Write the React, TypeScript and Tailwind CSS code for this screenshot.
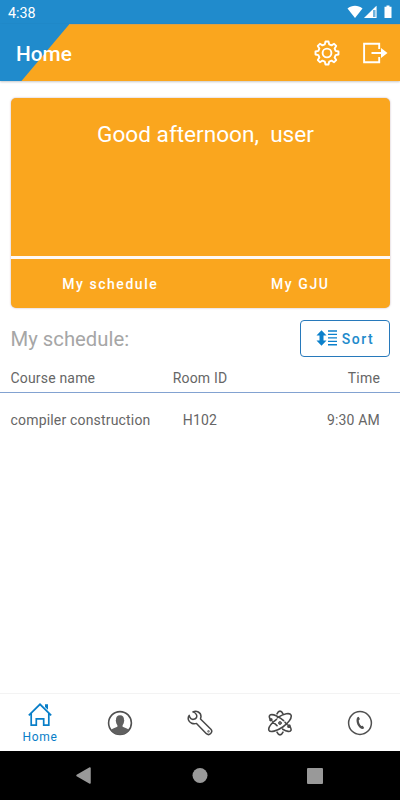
import React from "react";

function StatusBar() {
  return (
    <div className="flex h-6 items-center justify-between bg-[#208bcc] pl-2 pr-[7px] text-white">
      <span className="pt-[2px] text-[14.3px] leading-5">4:38</span>
      <svg width="46" height="14" viewBox="0 0 46 14" fill="white">
        <path d="M0.5 3.4C4.8 0 11.2 0 15.5 3.4L8 13Z" />
        <path d="M29.5 0.8V13H17Z" fillOpacity=".35" />
        <path d="M29.5 0.8V13H17ZM28.5 5H26v7h2.5Z" fillRule="evenodd" />
        <path d="M39.5 0.5h3v1.3h2V13h-7V1.8h2Z" />
      </svg>
    </div>
  );
}

function Header() {
  return (
    <header className="relative h-[57px] bg-[#faa61e] shadow-[0_1px_2px_rgba(0,0,0,0.22)]">
      <svg className="absolute inset-0" width="400" height="57">
        <path d="M0 0H69.5L21.5 57H0Z" fill="#208bcc" />
        <path d="M69 0.2H400" stroke="#c79a65" strokeWidth="0.8" />
      </svg>
      <div className="relative flex h-full items-center pl-4 pr-3 text-white">
        <h1 className="flex-1 pt-[3px] text-[20.8px] font-medium leading-6">Home</h1>
        <svg width="26" height="26" viewBox="0 0 26 26" fill="none" stroke="white" strokeWidth="1.9" strokeLinejoin="round" className="mr-[22px]">
          <path d="M10.8 4.4L11.5 1.5H14.5L15.2 4.4L17.6 5.4L20.1 3.8L22.2 5.9L20.6 8.4L21.6 10.8L24.5 11.5V14.5L21.6 15.2L20.6 17.6L22.2 20.1L20.1 22.2L17.6 20.6L15.2 21.6L14.5 24.5H11.5L10.8 21.6L8.4 20.6L5.9 22.2L3.8 20.1L5.4 17.6L4.4 15.2L1.5 14.5V11.5L4.4 10.8L5.4 8.4L3.8 5.9L5.9 3.8L8.4 5.4Z" />
          <circle cx="13" cy="13" r="4.4" />
        </svg>
        <svg width="26" height="22" viewBox="0 0 26 22" fill="none" stroke="white" strokeWidth="1.9">
          <path d="M17.2 7V1.8H2.1V20.2H17.2V15M9.5 11H20" />
          <path d="M19 6L25.5 11L19 16Z" fill="white" stroke="none" />
        </svg>
      </div>
    </header>
  );
}

function WelcomeCard() {
  return (
    <section className="ml-[10.5px] mr-[10.5px] mt-[17px] flex h-[210px] flex-col overflow-hidden rounded-[5px] bg-[#faa61e] text-white shadow-[0_0_2px_rgba(160,130,150,0.7)]">
      <div className="h-[158px] pl-[11px] pt-[22px] text-center text-[22.6px] leading-[30px]">
        <span className="whitespace-pre">Good afternoon,  user</span>
      </div>
      <div className="h-[3px] bg-[#fffaf5]" />
      <div className="grid flex-1 grid-cols-2 items-center text-center text-[14px] font-medium leading-5 tracking-[1.55px]">
        <span className="pl-[10px]">My schedule</span>
        <span className="pl-[11px]">My GJU</span>
      </div>
    </section>
  );
}

function SortIcon() {
  return (
    <svg width="22" height="16" viewBox="0 0 22 16" fill="#0b80cb">
      <path d="M5.5 0.3L10.5 5.5H7.5V10.5H10.5L5.5 15.7L0.5 10.5H3.5V5.5H0.5Z" />
      <path d="M12 0.3h9v1.4h-9zM12 3.7h9v1.4h-9zM12 7.2h9v1.4h-9zM12 10.7h9v1.4h-9zM12 14.1h9v1.4h-9z" />
    </svg>
  );
}

function Schedule() {
  return (
    <section>
      <div className="mt-[11px] flex h-[38px] items-center justify-between px-[10.5px]">
        <h2 className="pt-px text-[20.3px] leading-7 text-[#a6a6a6]">My schedule:</h2>
        <button className="flex h-[37px] w-[90px] items-center justify-center gap-1 rounded-[4px] border border-[#2779bb] pl-px text-[14px] font-medium tracking-[1.5px] text-[#218acb]">
          <SortIcon />
          <span className="pt-[2px]">Sort</span>
        </button>
      </div>
      <div className="grid h-[36px] grid-cols-[139.5px_100px_1fr] items-center border-b-[1.5px] border-[#82a2d1] pl-[10.5px] pr-[20px] pt-[7px] text-[14px] leading-5 tracking-[0.18px] text-[#666]">
        <span>Course name</span>
        <span className="text-center">Room ID</span>
        <span className="text-right">Time</span>
      </div>
      <div className="grid h-[54px] grid-cols-[139.5px_100px_1fr] items-center pl-[10.5px] pr-[20px] text-[14px] leading-5 tracking-[0.18px] text-[#666]">
        <span className="whitespace-nowrap">compiler construction</span>
        <span className="text-center">H102</span>
        <span className="text-right">9:30 AM</span>
      </div>
    </section>
  );
}

function HomeIcon() {
  return (
    <svg width="24" height="24" viewBox="0 0 24 24" fill="none" stroke="#087ec8" strokeWidth="1.7">
      <path d="M0.8 12.3L12 1.3L23.2 12.3M3.2 10.6V22.2H8.3V15.9H15.7V22.2H20.8V10.6" />
      <path d="M17 1.3H20V6.8L17 4.1Z" fill="#087ec8" stroke="none" />
    </svg>
  );
}

function PersonIcon() {
  return (
    <svg width="26" height="26" viewBox="0 0 26 26">
      <circle cx="13" cy="13" r="11.4" fill="none" stroke="#505050" strokeWidth="1.6" />
      <path d="M4.2 20.2C5 18.4 8.1 18.2 10.4 16.8V15.2C9.5 14.1 9.1 12.8 9 11.5C8.5 10.8 8.7 10.2 9 9.9C8.8 6.8 10.3 5.2 13 5.2C15.7 5.2 17.2 6.8 17 9.9C17.3 10.2 17.5 10.8 17 11.5C16.9 12.8 16.5 14.1 15.6 15.2V16.8C17.9 18.2 21 18.4 21.8 20.2C19.8 23.1 16.6 24.7 13 24.7C9.4 24.7 6.2 23.1 4.2 20.2Z" fill="#606060" />
    </svg>
  );
}

function WrenchIcon() {
  return (
    <svg width="26" height="26" viewBox="0 0 26 26" fill="none" stroke="#484848" strokeWidth="1.5" strokeLinecap="round" strokeLinejoin="round">
      <path d="M2.2 5.4C2.9 8.2 4.6 9.7 6.8 9.3C9.2 8.9 10.2 7 9.6 5.1C9.1 3.4 7.7 2.4 5.9 1.9C9.6 0.1 13.9 2.5 14 6.5L13.5 9L23.9 19.3C26.4 22.2 22.4 26.2 19.4 23.7L9.5 13.4C6.1 14.4 2.6 13 1.5 9.9C0.9 8.2 1.2 6.7 2.2 5.4Z" />
      <circle cx="21.5" cy="21.4" r=".4" />
    </svg>
  );
}

function AtomIcon() {
  return (
    <svg width="26" height="26" viewBox="0 0 26 26" fill="none" stroke="#484848" strokeWidth="1.6" strokeLinecap="round">
      <path d="M2.7 8.2C1.2 4.6 4.4 3.6 9.2 5.8C11.7 7 14.4 8.7 16.6 10.6M10.5 7.7C17 3.5 22.8 2.4 24 5C25.2 7.9 21.4 13.2 15.8 17C9.8 21.1 3.2 22.8 2 20.4C.9 18 4.2 13.4 9.5 9.3M5.9 11.5C7.1 13.1 8.4 14.4 10 15.7M15.7 19.2C19.8 21.5 23.3 22.3 24 20.3C24.3 19.4 23.9 18.2 23.3 17" />
      <path d="M10 3.9C10.9 2 11.9 1.1 13 1.1C14.1 1.1 15.1 2 16 3.9M10 22.1C10.9 24 11.9 24.9 13 24.9C14.1 24.9 15.1 24 16 22.1M20.1 14.5L18 12.2" />
      <circle cx="13" cy="13" r="1.5" fill="#606060" stroke="#606060" strokeWidth="1" />
      <circle cx="3.9" cy="9.8" r="1" fill="#606060" />
      <circle cx="22" cy="16.2" r="1.1" fill="#606060" />
    </svg>
  );
}

function PhoneIcon() {
  return (
    <svg width="26" height="26" viewBox="0 0 26 26">
      <circle cx="13" cy="13" r="11.4" fill="none" stroke="#505050" strokeWidth="1.5" />
      <path d="M10.1 7.4L11.7 6.8L13 9.3L11.8 10.1C11.7 12.4 12.6 14.6 14.3 16.1L15.8 15.7L17.2 18.1L16 19C11.2 18.6 8.2 11.4 10.1 7.4Z" fill="#505050" />
    </svg>
  );
}

function TabBar() {
  return (
    <nav className="grid h-[58px] grid-cols-5 items-center justify-items-center border-t border-[#f3f3f3] bg-white">
      <div className="flex flex-col items-center pt-[3px]">
        <HomeIcon />
        <span className="mt-[2px] text-[12px] leading-4 tracking-[0.65px] text-[#087ec8]">Home</span>
      </div>
      <PersonIcon />
      <WrenchIcon />
      <AtomIcon />
      <PhoneIcon />
    </nav>
  );
}

function SystemNav() {
  return (
    <div className="h-[49px] bg-black">
      <svg width="400" height="49" viewBox="0 0 400 49" fill="#999">
        <path d="M77 24.5L90 17V32Z" stroke="#999" strokeWidth="1.5" strokeLinejoin="round" />
        <circle cx="200" cy="24.5" r="7.5" />
        <rect x="307" y="17" width="16" height="16" rx="1" />
      </svg>
    </div>
  );
}

export default function App() {
  return (
    <div className="flex h-[800px] w-[400px] flex-col overflow-hidden bg-white font-['Roboto',sans-serif]">
      <StatusBar />
      <Header />
      <main className="flex-1">
        <WelcomeCard />
        <Schedule />
      </main>
      <TabBar />
      <SystemNav />
    </div>
  );
}
